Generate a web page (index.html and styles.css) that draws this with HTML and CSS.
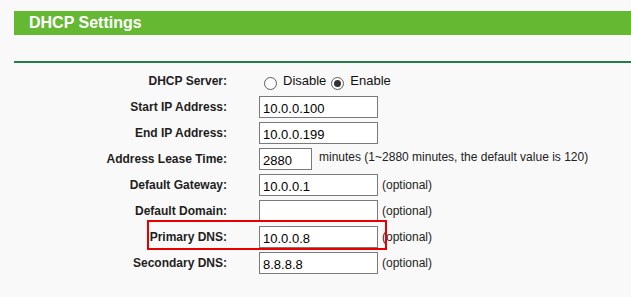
FILE: index.html
```html
<!DOCTYPE html>
<html lang="en">

<head>
    <meta charset="UTF-8">
    <title>DHCP Settings</title>
    <link rel="stylesheet" href="styles.css">
</head>

<body>
    <div class="panel">
        <div class="title">DHCP Settings</div>
        <div class="rule"></div>

        <div class="form">
            <label class="label">DHCP Server:</label>
            <div class="field">
                <span class="radio"></span><span class="opt">Disable</span>
                <span class="radio checked"></span><span class="opt">Enable</span>
            </div>

            <label class="label">Start IP Address:</label>
            <div class="field"><input class="box" type="text" value="10.0.0.100"></div>

            <label class="label">End IP Address:</label>
            <div class="field"><input class="box" type="text" value="10.0.0.199"></div>

            <label class="label">Address Lease Time:</label>
            <div class="field">
                <input class="box short" type="text" value="2880">
                <span class="hint wide">minutes (1~2880 minutes, the default value is 120)</span>
            </div>

            <label class="label">Default Gateway:</label>
            <div class="field"><input class="box" type="text" value="10.0.0.1"><span class="hint">(optional)</span></div>

            <label class="label">Default Domain:</label>
            <div class="field"><input class="box" type="text" value=""><span class="hint">(optional)</span></div>

            <label class="label">Primary DNS:</label>
            <div class="field"><input class="box" type="text" value="10.0.0.8"><span class="hint">(optional)</span></div>

            <label class="label">Secondary DNS:</label>
            <div class="field"><input class="box" type="text" value="8.8.8.8"><span class="hint">(optional)</span></div>

            <!-- highlight around Primary DNS -->
            <div class="mark"></div>
        </div>
    </div>
</body>

</html>
```

FILE: styles.css
```css
body {
    margin: 0;
    background-color: #f9f9f9;
    font-family: "Liberation Sans", Arial, sans-serif;
    color: #222;
}

.panel {
    padding: 11px 0 0 14px;
}

.title {
    background-color: #65b832;
    color: #fff;
    height: 24px;
    line-height: 24px;
    padding-left: 15px;
    font-size: 16px;
    font-weight: bold;
}

.rule {
    margin-top: 26px;
    border-top: 2px solid #267b4a;
}

.form {
    position: relative;
    display: grid;
    grid-template-columns: 213px auto;
    grid-auto-rows: 22px;
    column-gap: 32px;
    row-gap: 4px;
    margin-top: 7px;
}

.label {
    text-align: right;
    font-size: 12px;
    font-weight: bold;
    line-height: 22px;
    color: #1e1e1e;
}

.field {
    display: flex;
    align-items: center;
    font-size: 12px;
}

.radio {
    box-sizing: border-box;
    width: 13px;
    height: 13px;
    margin: 4px 6px 0 5px;
    border: 1px solid #5a5a5a;
    border-radius: 50%;
    background-color: #fff;
    position: relative;
}

.radio.checked::after {
    content: "";
    position: absolute;
    left: 2px;
    top: 2px;
    width: 7px;
    height: 7px;
    border-radius: 50%;
    background-color: #333;
}

.opt {
    font-size: 13px;
    color: #111;
    margin-top: -2px;
}

.box {
    box-sizing: border-box;
    width: 119px;
    height: 22px;
    margin: 0;
    padding: 3px 0 0 3px;
    border: 1px solid #7a7a7a;
    background-color: #fff;
    font-family: "Liberation Sans", Arial, sans-serif;
    font-size: 13px;
    color: #000;
    outline: none;
}

.box.short {
    width: 53px;
}

.hint {
    margin-left: 4px;
    margin-top: -1px;
}

.hint.wide {
    margin-left: 7px;
    margin-top: -4px;
}

.mark {
    position: absolute;
    left: 133px;
    top: 150px;
    width: 240px;
    height: 30px;
    box-sizing: border-box;
    border: 2px solid #e60000;
    pointer-events: none;
}
```
